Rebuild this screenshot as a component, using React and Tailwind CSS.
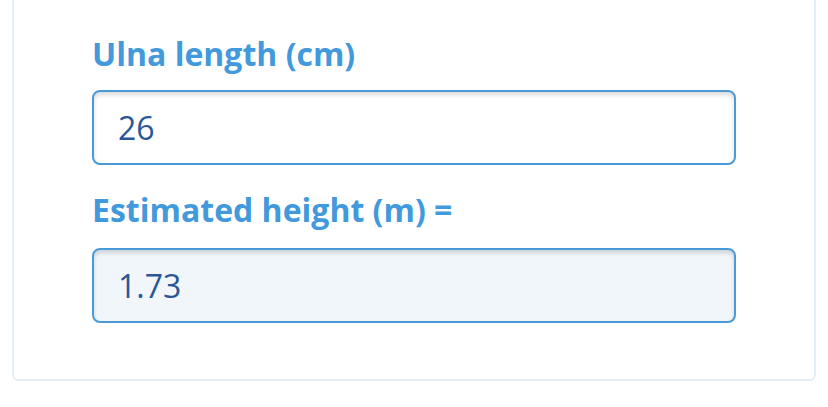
const labelClass =
  "block text-[32px] leading-[44px] font-bold text-[#4299dc] [font-family:'Open_Sans',sans-serif]";
const fieldClass =
  "block h-[75px] w-full rounded-lg border-2 border-[#4a9ad9] px-6 text-[32px] text-[#2b5797] shadow-[inset_0_3px_4px_rgba(0,0,0,0.14)] outline-none [font-family:'Open_Sans',sans-serif]";

export default function App() {
  return (
    <div className="min-h-screen bg-white px-3 pb-6">
      <div className="-mt-4 rounded-md border-2 border-[#e4eef8] bg-white px-[78px] pb-[56px] pt-[46px]">
        <label className={labelClass} htmlFor="ulna">
          Ulna length (cm)
        </label>
        <input id="ulna" type="text" defaultValue="26" className={`mt-[14px] bg-white ${fieldClass}`} />

        <label className={`mt-[23px] ${labelClass}`} htmlFor="height">
          Estimated height (m) =
        </label>
        <input
          id="height"
          type="text"
          readOnly
          value="1.73"
          className={`mt-[16px] bg-[#f1f6fb] ${fieldClass}`}
        />
      </div>
    </div>
  );
}
